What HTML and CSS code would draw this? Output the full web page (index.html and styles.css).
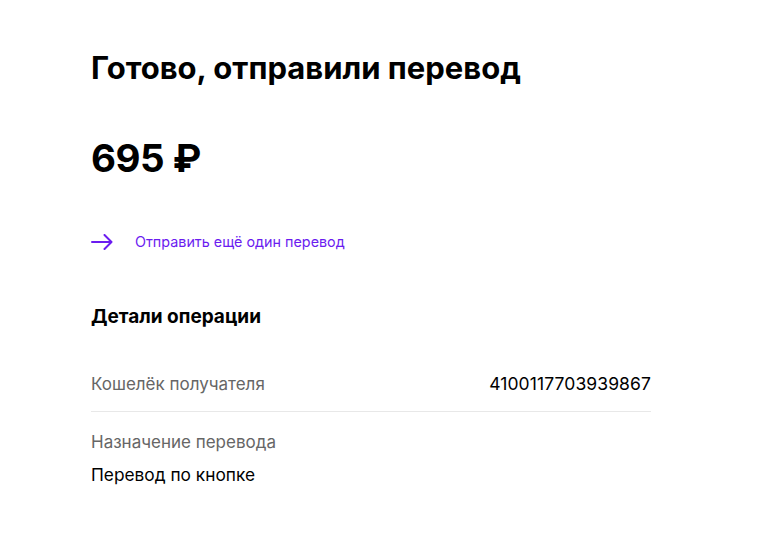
FILE: index.html
```html
<!DOCTYPE html>
<html lang="ru">
<head>
<meta charset="utf-8">
<link rel="stylesheet" href="styles.css">
</head>
<body>
<main class="page">
  <h1 class="title">Готово, отправили перевод</h1>
  <div class="amount">695 ₽</div>
  <a class="again" href="#">
    <svg class="arrow" width="22" height="16" viewBox="0 0 22 16" fill="none" stroke="#6b1cf0" stroke-width="2" stroke-linecap="round" stroke-linejoin="round">
      <path d="M1 8 H20"/>
      <path d="M13.5 1 L20.5 8 L13.5 15"/>
    </svg>
    <span>Отправить ещё один перевод</span>
  </a>
  <h2 class="details-title">Детали операции</h2>
  <div class="row">
    <span class="label">Кошелёк получателя</span>
    <span class="value">4100117703939867</span>
  </div>
  <div class="block">
    <div class="label">Назначение перевода</div>
    <div class="value">Перевод по кнопке</div>
  </div>
</main>
</body>
</html>
```
FILE: styles.css
```css
* { box-sizing: border-box; }
body {
  margin: 0;
  background: #fff;
  font-family: "Inter", "Noto Sans", sans-serif;
  color: #000;
}
.page {
  width: 560px;
  margin-left: 91px;
  padding-top: 48px;
}
.title {
  margin: 0;
  font-size: 31px;
  line-height: 40px;
  font-weight: 700;
}
.amount {
  margin-top: 45px;
  font-size: 38.5px;
  line-height: 50px;
  font-weight: 700;
  letter-spacing: -0.5px;
}
.again {
  display: flex;
  align-items: center;
  gap: 22px;
  margin-top: 49px;
  color: #6b1cf0;
  text-decoration: none;
  font-size: 14.35px;
  line-height: 20px;
}
.details-title {
  margin: 53px 0 0;
  font-size: 19px;
  line-height: 24px;
  font-weight: 700;
}
.row {
  display: flex;
  justify-content: space-between;
  align-items: center;
  margin-top: 44px;
  padding-bottom: 16px;
  border-bottom: 1px solid #e8e8e8;
}
.label {
  color: #666;
  font-size: 17px;
  line-height: 22px;
}
.value {
  color: #000;
  font-size: 17.3px;
  line-height: 22px;
}
.row .value { font-size: 17.5px; letter-spacing: 0.1px; }
.block { padding-top: 19px; }
.block .value { margin-top: 11px; }
```
